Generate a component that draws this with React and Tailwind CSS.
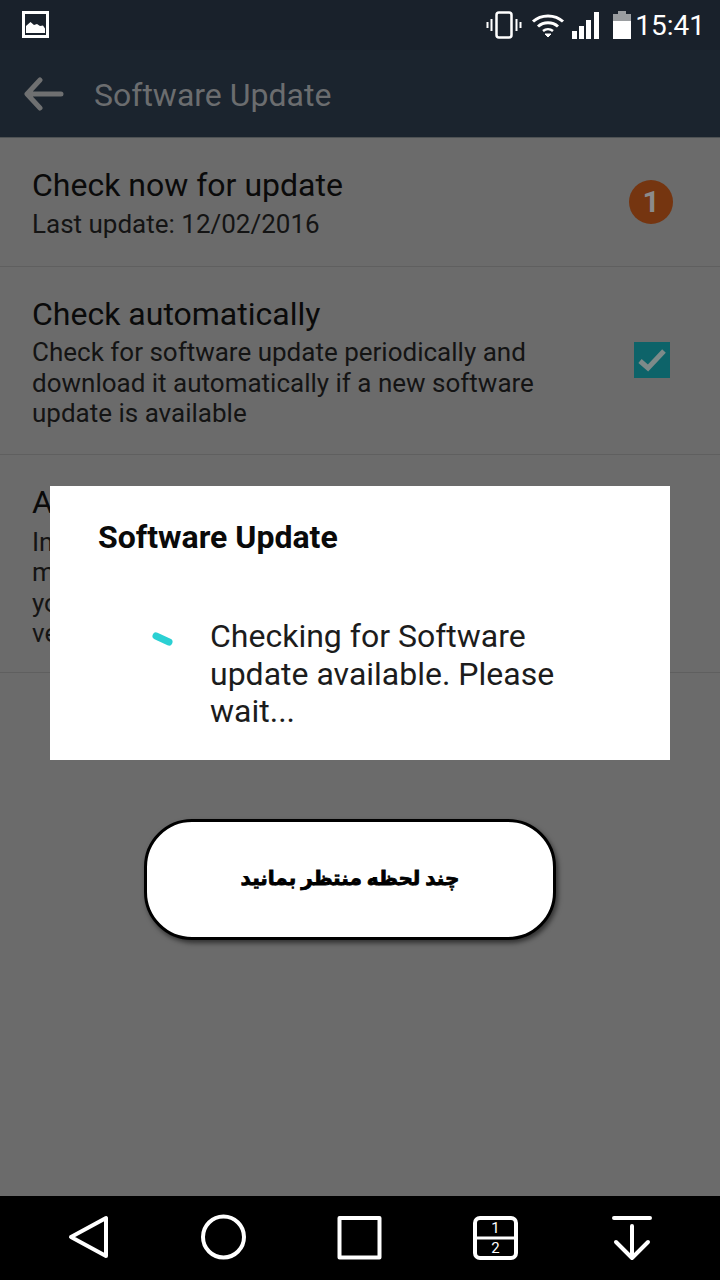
import React from "react";

function StatusBar() {
  return (
    <div className="h-[50px] shrink-0 bg-[#19212b] flex items-center pl-[22px] pr-[15px]">
      <svg width="28" height="28" viewBox="0 0 28 28" className="shrink-0">
        <rect x="1.500" y="1.500" width="24" height="24" fill="#19212b" stroke="#fff" strokeWidth="3" />
        <path d="M4 22V15L8.500 11L12 14L15 13L18 15L21 14.500L23 17.500V22Z" fill="#fff" />
      </svg>
      <div className="ml-auto flex items-center">
        <svg width="36" height="30" viewBox="0 0 36 30" fill="none" stroke="#fff" className="shrink-0">
          <rect x="10.500" y="2.500" width="15" height="25" rx="2.500" strokeWidth="2.500" />
          <path d="M5.500 9V21M1.500 12V18M30.500 9V21M34.500 12V18" strokeWidth="2" />
        </svg>
        <svg width="34" height="28" viewBox="0 0 34 28" className="ml-[9px] shrink-0" fill="none" stroke="#fff">
          <path d="M2 10.500C10 3 24 3 32 10.500" strokeWidth="3" />
          <path d="M7 15.500C12.500 10.500 21.500 10.500 27 15.500" strokeWidth="3" />
          <path d="M12 20C15 17.500 19 17.500 22 20" strokeWidth="2.500" />
          <path d="M14 23H20L17 26Z" fill="#fff" strokeWidth="1" />
        </svg>
        <svg width="30" height="30" viewBox="0 0 30 30" className="ml-[6px] shrink-0" fill="#fff">
          <rect x="1" y="21" width="5" height="8" />
          <rect x="8" y="16" width="5" height="13" />
          <rect x="15" y="10" width="5" height="19" />
          <rect x="23" y="2" width="5" height="27" />
        </svg>
        <svg width="20" height="30" viewBox="0 0 20 30" className="ml-[11px] shrink-0">
          <rect x="6" y="1" width="8" height="4" fill="#9a9da0" />
          <rect x="1" y="4" width="18" height="7" fill="#9a9da0" />
          <rect x="1" y="11" width="18" height="18" fill="#fff" />
        </svg>
        <span className="ml-[3px] mt-[2px] font-['Roboto',sans-serif] text-[28px] leading-none text-white">15:41</span>
      </div>
    </div>
  );
}

function AppBar() {
  return (
    <div className="h-[88px] shrink-0 bg-[#1b242e] flex items-center pl-[24px] border-b border-[#4e5254]">
      <svg width="40" height="34" viewBox="0 0 40 34" fill="none" stroke="#6f7071" strokeWidth="5" strokeLinecap="round" strokeLinejoin="round" className="shrink-0">
        <path d="M37 17H4M16 3L3 17L16 31" />
      </svg>
      <span className="ml-[30px] mt-[2px] text-[32px] leading-none text-[#6b6d6f]">Software Update</span>
    </div>
  );
}

function Row({ title, children, className, right, gap }) {
  return (
    <div className={"shrink-0 border-b border-[#5f5f5f] flex pl-[32px] " + className}>
      <div className="w-[540px] shrink-0">
        <div className="text-[32px] leading-[36px] text-[#0a0a0a]">{title}</div>
        <div className={"text-[26px] leading-[30.500px] text-[#141414] " + gap}>{children}</div>
      </div>
      {right}
    </div>
  );
}

function NavBar() {
  return (
    <div className="h-[84px] shrink-0 bg-black flex items-center">
      <svg width="720" height="84" viewBox="0 0 720 84" fill="none" stroke="#fff" strokeWidth="4" strokeLinejoin="round" strokeLinecap="round">
        <path d="M106 22V60L71 41Z" />
        <ellipse cx="223.500" cy="41" rx="20.500" ry="20.500" />
        <rect x="339.500" y="22" width="40" height="39.500" />
        <rect x="475" y="22" width="41" height="40" rx="5" />
        <path d="M475 42H516" strokeWidth="3" />
        <text x="495.500" y="37" textAnchor="middle" fill="#fff" stroke="none" fontFamily="Roboto, sans-serif" fontSize="15">1</text>
        <text x="495.500" y="57" textAnchor="middle" fill="#fff" stroke="none" fontFamily="Roboto, sans-serif" fontSize="15">2</text>
        <path d="M614 22H650M632 30V62M616 46L632 62L648 46" />
      </svg>
    </div>
  );
}

export default function App() {
  return (
    <div className="relative w-[720px] h-[1280px] overflow-hidden flex flex-col bg-[#6b6b6b] font-['Roboto',sans-serif]">
      <StatusBar />
      <AppBar />
      <Row
        title="Check now for update"
        className="h-[129px] pt-[29px]"
        gap="mt-[6px]"
        right={
          <div className="ml-[57px] mt-[13px] w-[44px] h-[44px] rounded-full bg-[#753510] flex items-center justify-center text-[30px] font-bold leading-none text-[#8b8b8b]">
            1
          </div>
        }
      >
        Last update: 12/02/2016
      </Row>
      <Row
        title="Check automatically"
        className="h-[188px] pt-[29px]"
        gap="mt-[5px]"
        right={
          <div className="ml-[62px] mt-[46px] w-[36px] h-[36px] bg-[#0d6369] flex items-center justify-center">
            <svg width="30" height="26" viewBox="0 0 30 26" fill="none" stroke="#7d8a89" strokeWidth="5">
              <path d="M3 14L11 21L27 4" />
            </svg>
          </div>
        }
      >
        Check for software update periodically and download it automatically if a new software update is available
      </Row>
      <Row title="A" className="h-[218px] pt-[29px]" gap="mt-[6.500px]">
        In
        <br />
        m
        <br />
        yo
        <br />
        ve
      </Row>

      <div className="absolute left-[50px] top-[486px] w-[620px] h-[274px] bg-white pl-[48px]">
        <div className="pt-[32px] text-[32px] leading-[38px] font-bold text-[#0a0a0a]">Software Update</div>
        <div className="flex mt-[62px]">
          <svg width="32" height="32" viewBox="0 0 32 32" className="shrink-0 mt-[4px] ml-[48px]" fill="none">
            <path d="M10 14L23 20" stroke="#2bd0d3" strokeWidth="7" strokeLinecap="round" />
          </svg>
          <div className="ml-[32px] w-[370px] text-[32px] leading-[37.500px] text-[#1c1c1c]">
            Checking for Software update available. Please wait...
          </div>
        </div>
      </div>

      <div
        dir="rtl"
        className="absolute left-[144px] top-[819px] w-[412px] h-[121px] pb-[4px] rounded-[48px] bg-white border-[3px] border-black shadow-[2px_3px_5px_rgba(0,0,0,0.55)] flex items-center justify-center font-['DejaVu_Sans',sans-serif] font-bold text-[20px] [word-spacing:-2px] [-webkit-text-stroke:0.8px_black] text-black"
      >
        چند لحظه منتظر بمانید
      </div>

      <div className="flex-1" />
      <NavBar />
    </div>
  );
}
